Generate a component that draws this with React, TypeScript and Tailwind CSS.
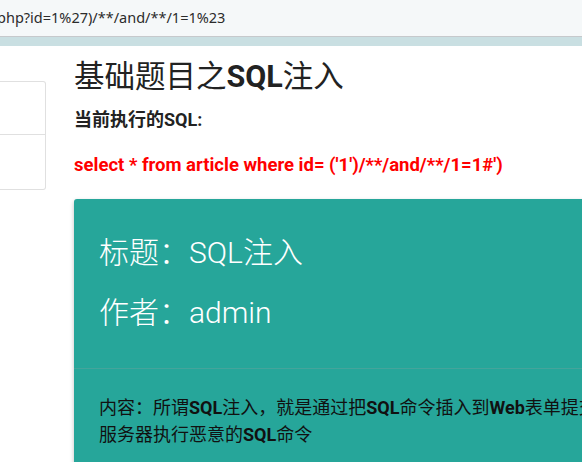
export default function App() {
  const cjk = { fontFamily: 'Roboto, "Noto Sans CJK SC", sans-serif' };
  return (
    <div className="h-[462px] w-[582px] overflow-hidden bg-white" style={cjk}>
      {/* address bar */}
      <div className="flex h-[37px] items-center overflow-hidden border-b border-[#c6c9cc] bg-[#f5f8f9]">
        <span
          className="-ml-[3px] whitespace-nowrap text-[14.5px] text-[#2b2b2b]"
          style={{ fontFamily: '"Noto Sans", "Open Sans", sans-serif' }}
        >
          php?id=1%27)/**/and/**/1=1%23
        </span>
      </div>
      <div className="h-[9px] bg-[#c9dfe2]" />

      <div className="flex gap-[28px]">
        {/* side list */}
        <div className="mt-[35px] h-[109px] w-[46px] shrink-0 rounded-r-[3px] border-y border-r border-[#e0e0e0]">
          <div className="h-[53px] border-b border-[#e0e0e0]" />
        </div>

        {/* main */}
        <div className="min-w-0 flex-1">
          <h1 className="mt-[13px] whitespace-nowrap text-[30.5px] leading-[36px] text-[#222]">
            基础题目之<b>SQL</b>注入
          </h1>
          <div className="mt-[14px] whitespace-nowrap text-[18px] font-bold leading-[22px] text-[#222]">
            当前执行的SQL:
          </div>
          <div className="mt-[23px] whitespace-nowrap text-[18.5px] font-bold leading-[22px] text-[#ff0000]">
            select * from article where id= ('1')/**/and/**/1=1#')
          </div>

          <div className="mt-[23px] w-[700px] rounded-tl-[3px] bg-[#26a69a] shadow-[0_2px_4px_rgba(0,0,0,0.25)]">
            <div className="px-[25px] pt-[34px] pb-[35px] text-white">
              <div className="whitespace-nowrap text-[30px] font-light leading-[40px]">标题：SQL注入</div>
              <div className="mt-[20px] whitespace-nowrap text-[30px] font-light leading-[40px]">作者：admin</div>
            </div>
            <div className="whitespace-nowrap border-t border-[rgba(160,160,160,0.25)] px-[25px] pt-[25px] pb-[20px] text-[18px] leading-[27px] text-[#111]">
              内容：所谓<b>SQL</b>注入，就是通过把<b>SQL</b>命令插入到<b>Web</b>表单提交或输入域名
              <br />
              服务器执行恶意的<b>SQL</b>命令
            </div>
          </div>
        </div>
      </div>
    </div>
  );
}
